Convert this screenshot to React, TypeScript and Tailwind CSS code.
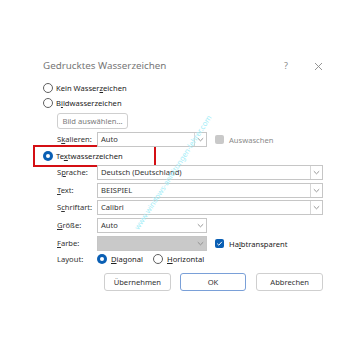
import React from "react";

const Chev = () => (
  <svg width="7" height="5" viewBox="0 0 7 5" className="block">
    <path d="M0.8 1.2 L3.5 3.8 L6.2 1.2" fill="none" stroke="#8a8a8a" strokeWidth="0.9" />
  </svg>
);

const Radio = ({ on = false }: { on?: boolean }) =>
  on ? (
    <span className="w-[10px] h-[10px] rounded-full bg-[#0a5fb4] flex items-center justify-center shrink-0">
      <span className="w-[4px] h-[4px] rounded-full bg-white" />
    </span>
  ) : (
    <span className="w-[10px] h-[10px] rounded-full border border-[#606060] bg-white shrink-0" />
  );

const U = ({ children }: { children: React.ReactNode }) => <span className="underline underline-offset-[1px]">{children}</span>;

const Select = ({ value, w, split = false, disabled = false }: { value: string; w: string; split?: boolean; disabled?: boolean }) => (
  <div className={`${w} h-[15px] border border-[#c6c6c6] flex items-center ${disabled ? "bg-[#c9c9c9]" : "bg-white"}`}>
    <span className="flex-1 pl-[3px] text-[#333] leading-[13px] whitespace-nowrap">{value}</span>
    <span className={`w-[12px] h-full flex items-center justify-center ${split ? "border-l border-[#d6d6d6]" : ""}`}>
      <Chev />
    </span>
  </div>
);

const Row = ({ label, children, mt }: { label: React.ReactNode; children: React.ReactNode; mt: string }) => (
  <div className={`flex items-center ${mt} pl-[14px] h-[15px]`}>
    <span className="w-[40px] text-[#333] leading-[13px]">{label}</span>
    {children}
  </div>
);

export default function App() {
  return (
    <div
      className="relative w-[350px] h-[350px] bg-white overflow-hidden text-[7.6px]"
      style={{ fontFamily: '"Noto Sans", "Open Sans", sans-serif' }}
    >
      <div className="pl-[43px] pt-[60px] pr-[27px]">
        {/* header */}
        <div className="flex items-center h-[12px]">
          <span className="flex-1 text-[9.8px] text-[#777] leading-[12px]">Gedrucktes Wasserzeichen</span>
          <span className="text-[9px] text-[#8a8a8a] leading-[12px] mr-[26px]">?</span>
          <svg width="9" height="9" viewBox="0 0 9 9">
            <path d="M1 1 L8 8 M8 1 L1 8" stroke="#8a8a8a" strokeWidth="0.9" />
          </svg>
        </div>

        <div className="flex items-center gap-[3px] mt-[10px] h-[12px]">
          <Radio />
          <span className="text-[#222] leading-[12px]">Kein Wasser<U>z</U>eichen</span>
        </div>
        <div className="flex items-center gap-[3px] mt-[3px] h-[12px]">
          <Radio />
          <span className="text-[#222] leading-[12px]">B<U>i</U>ldwasserzeichen</span>
        </div>
        <div className="ml-[14px] mt-[4px] w-[71px] h-[16px] border border-[#cfcfcf] rounded-[3px] flex items-center justify-center text-[#7a7a7a] leading-[12px]">
          Bild auswählen...
        </div>

        <Row label={<>S<U>k</U>alieren:</>} mt="mt-[3px]">
          <Select value="Auto" w="w-[110px]" split />
          <span className="ml-[8px] w-[9px] h-[9px] rounded-[2px] bg-[#c9c9c9]" />
          <span className="ml-[5px] text-[#8a8a8a] leading-[12px]">Auswaschen</span>
        </Row>

        <div className="-ml-[10px] mt-[-2px] w-[123px] h-[22px] border-[2px] border-[#d40f14] flex items-center pl-[8px] gap-[3px]">
          <Radio on />
          <span className="text-[#222] leading-[12px]">Te<U>x</U>twasserzeichen</span>
        </div>

        <Row label={<>S<U>p</U>rache:</>} mt="mt-[-2px]">
          <Select value="Deutsch (Deutschland)" w="w-[226px]" split />
        </Row>
        <Row label={<><U>T</U>ext:</>} mt="mt-[3px]">
          <Select value="BEISPIEL" w="w-[226px]" split />
        </Row>
        <Row label={<>S<U>c</U>hriftart:</>} mt="mt-[2px]">
          <Select value="Calibri" w="w-[226px]" split />
        </Row>
        <Row label={<><U>G</U>röße:</>} mt="mt-[3px]">
          <Select value="Auto" w="w-[110px]" />
        </Row>
        <Row label={<><U>F</U>arbe:</>} mt="mt-[3px]">
          <Select value="" w="w-[110px]" disabled />
          <span className="ml-[8px] w-[9px] h-[9px] rounded-[2px] bg-[#0a5fb4] flex items-center justify-center">
            <svg width="7" height="7" viewBox="0 0 7 7">
              <path d="M1.2 3.6 L2.8 5.2 L5.9 1.8" fill="none" stroke="white" strokeWidth="1" />
            </svg>
          </span>
          <span className="ml-[5px] text-[#222] leading-[12px]">Ha<U>l</U>btransparent</span>
        </Row>
        <div className="flex items-center mt-[0px] pl-[14px] h-[15px]">
          <span className="w-[40px] text-[#333] leading-[12px]">Layout:</span>
          <Radio on />
          <span className="ml-[4px] text-[#222] leading-[12px] w-[42px]"><U>D</U>iagonal</span>
          <Radio />
          <span className="ml-[4px] text-[#222] leading-[12px]"><U>H</U>orizontal</span>
        </div>

        <div className="flex mt-[7px] ml-[61px] gap-[9px]">
          <div className="w-[67px] h-[18px] border border-[#cfcfcf] rounded-[3px] flex items-center justify-center text-[#333] leading-[12px]">
            Übernehmen
          </div>
          <div className="w-[67px] h-[18px] border border-[#7aa0d8] rounded-[3px] flex items-center justify-center text-[#333] leading-[12px]">
            OK
          </div>
          <div className="w-[67px] h-[18px] border border-[#cfcfcf] rounded-[3px] ml-[1px] flex items-center justify-center text-[#333] leading-[12px]">
            Abbrechen
          </div>
        </div>
      </div>

      {/* diagonal faint watermark text */}
      <div
        className="absolute left-[88px] top-[168px] w-[170px] text-center text-[7.5px] text-[#a3eef8] leading-[9px] whitespace-nowrap"
        style={{ transform: "rotate(-57deg)" }}
      >
        www.windows-anleitungen-lehrer.com
      </div>
    </div>
  );
}
